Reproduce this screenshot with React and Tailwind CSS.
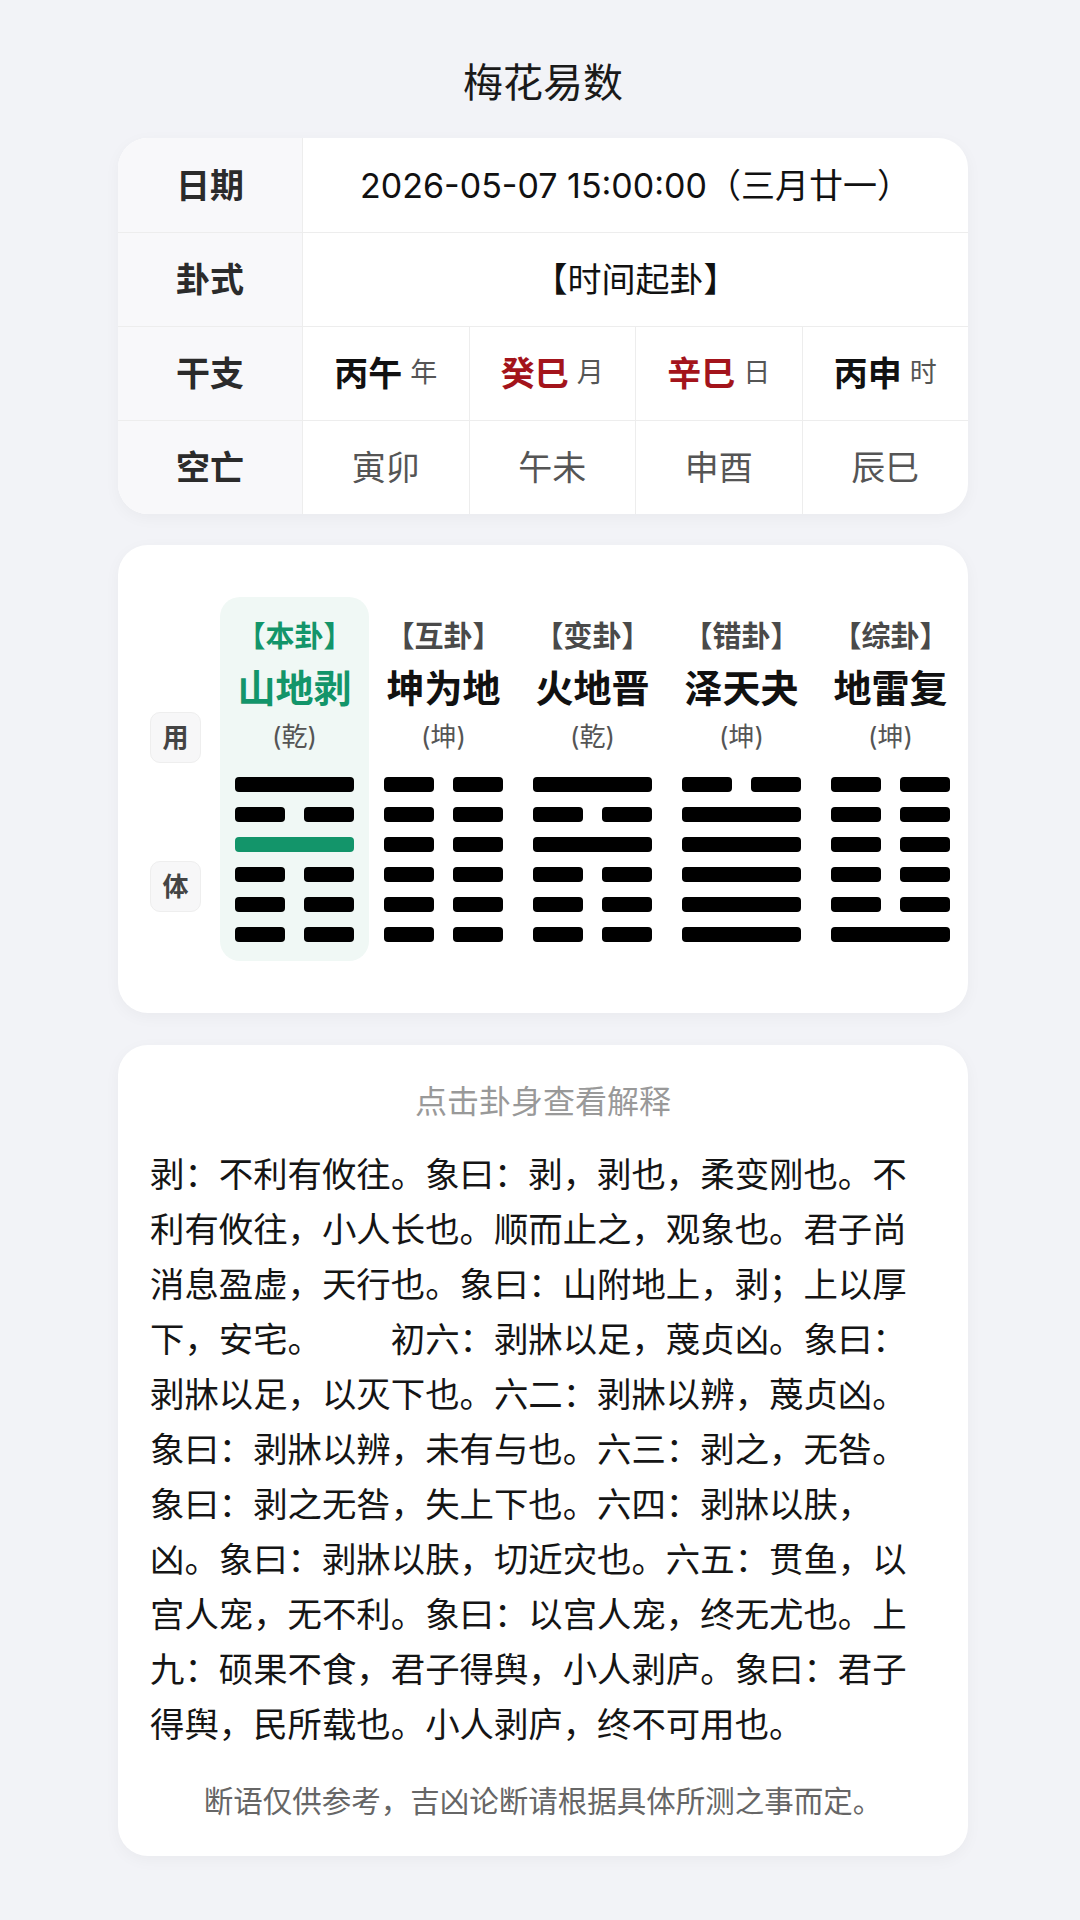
const FONT = "font-['Inter','Noto_Sans_CJK_SC',sans-serif]";

const ganzhi = [
  { gz: "丙午", tag: "年", red: false },
  { gz: "癸巳", tag: "月", red: true },
  { gz: "辛巳", tag: "日", red: true },
  { gz: "丙申", tag: "时", red: false },
];

const kongwang = ["寅卯", "午未", "申酉", "辰巳"];

// lines from top to bottom: 1 yang, 0 yin, 2 moving (green yang)
const guaList = [
  { label: "【本卦】", name: "山地剥", gong: "(乾)", lines: [1, 0, 2, 0, 0, 0], active: true },
  { label: "【互卦】", name: "坤为地", gong: "(坤)", lines: [0, 0, 0, 0, 0, 0] },
  { label: "【变卦】", name: "火地晋", gong: "(乾)", lines: [1, 0, 1, 0, 0, 0] },
  { label: "【错卦】", name: "泽天夬", gong: "(坤)", lines: [0, 1, 1, 1, 1, 1] },
  { label: "【综卦】", name: "地雷复", gong: "(坤)", lines: [0, 0, 0, 0, 0, 1] },
];

const explain =
  "剥：不利有攸往。象曰：剥，剥也，柔变刚也。不利有攸往，小人长也。顺而止之，观象也。君子尚消息盈虚，天行也。象曰：山附地上，剥；上以厚下，安宅。\u3000\u3000初六：剥牀以足，蔑贞凶。象曰：剥牀以足，以灭下也。六二：剥牀以辨，蔑贞凶。象曰：剥牀以辨，未有与也。六三：剥之，无咎。象曰：剥之无咎，失上下也。六四：剥牀以肤，凶。象曰：剥牀以肤，切近灾也。六五：贯鱼，以宫人宠，无不利。象曰：以宫人宠，终无尤也。上九：硕果不食，君子得舆，小人剥庐。象曰：君子得舆，民所载也。小人剥庐，终不可用也。";

const Label = ({ children }) => (
  <div className="w-[185px] shrink-0 flex items-center justify-center bg-[#f8f8fa] border-r border-[#ededed] text-[34px] font-bold text-[#2b2b2b]">
    {children}
  </div>
);

const Line = ({ type }) => {
  if (type === 0) {
    return (
      <div className="flex w-[119px] h-[15px] justify-between">
        <div className="w-[50px] h-full rounded-[4px] bg-black"></div>
        <div className="w-[50px] h-full rounded-[4px] bg-black"></div>
      </div>
    );
  }
  return (
    <div
      className={`w-[119px] h-[15px] rounded-[4px] ${type === 2 ? "bg-[#13956a]" : "bg-black"}`}
    ></div>
  );
};

const Gua = ({ g }) => (
  <div
    className={`w-[149px] shrink-0 flex flex-col items-center pt-[22px] pb-[19px] rounded-[20px] ${
      g.active ? "bg-[#f0f8f5]" : ""
    }`}
  >
    <div
      className={`h-[36px] leading-[36px] text-[29px] font-bold ${
        g.active ? "text-[#13956a]" : "text-[#4a4a4a]"
      }`}
    >
      {g.label}
    </div>
    <div
      className={`mt-[9px] h-[48px] leading-[48px] text-[38px] font-bold ${
        g.active ? "text-[#13956a]" : "text-[#111]"
      }`}
    >
      {g.name}
    </div>
    <div className="mt-[8px] h-[34px] leading-[34px] text-[26px] text-[#555]">{g.gong}</div>
    <div className="mt-[23px] flex flex-col gap-[15px]">
      {g.lines.map((t, i) => (
        <Line key={i} type={t} />
      ))}
    </div>
  </div>
);

const Badge = ({ children }) => (
  <div className="w-[51px] h-[51px] flex items-center justify-center rounded-[10px] bg-[#f7f7f8] border border-[#eeeeee] text-[26px] font-bold text-[#444]">
    {children}
  </div>
);

export default function App() {
  return (
    <div className={`min-h-[1920px] bg-[#f2f3f7] ${FONT} pb-[60px]`}>
      <div className="w-[850px] ml-[118px]">
        <div className="pt-[55px] h-[111px] leading-[56px] text-center text-[40px] text-[#1a1a1a]">
          梅花易数
        </div>

        <div className="mt-[27px] bg-white rounded-[30px] overflow-hidden shadow-[0_4px_16px_rgba(0,0,0,0.04)]">
          <div className="flex h-[94px]">
            <Label>日期</Label>
            <div className="flex-1 flex items-center justify-center text-[34px] text-[#111]">
              2026-05-07 15:00:00（三月廿一）
            </div>
          </div>
          <div className="flex h-[94px] border-t border-[#ededed]">
            <Label>卦式</Label>
            <div className="flex-1 flex items-center justify-center text-[34px] text-[#111]">
              【时间起卦】
            </div>
          </div>
          <div className="flex h-[94px] border-t border-[#ededed]">
            <Label>干支</Label>
            {ganzhi.map((c, i) => (
              <div
                key={c.tag}
                className={`flex-1 flex items-center justify-center gap-[8px] ${
                  i > 0 ? "border-l border-[#ededed]" : ""
                }`}
              >
                <span className={`text-[34px] font-bold ${c.red ? "text-[#a3141b]" : "text-[#111]"}`}>
                  {c.gz}
                </span>
                <span className="text-[27px] text-[#555]">{c.tag}</span>
              </div>
            ))}
          </div>
          <div className="flex h-[94px] border-t border-[#ededed]">
            <Label>空亡</Label>
            {kongwang.map((k, i) => (
              <div
                key={k}
                className={`flex-1 flex items-center justify-center text-[34px] text-[#555] ${
                  i > 0 ? "border-l border-[#ededed]" : ""
                }`}
              >
                {k}
              </div>
            ))}
          </div>
        </div>

        <div className="mt-[31px] bg-white rounded-[30px] shadow-[0_4px_16px_rgba(0,0,0,0.04)] flex pl-[32px] pr-[3px] py-[52px]">
          <div className="w-[51px] shrink-0 mr-[19px] flex flex-col pt-[115px] gap-[98px]">
            <Badge>用</Badge>
            <Badge>体</Badge>
          </div>
          {guaList.map((g) => (
            <Gua key={g.name} g={g} />
          ))}
        </div>

        <div className="mt-[32px] bg-white rounded-[30px] shadow-[0_4px_16px_rgba(0,0,0,0.04)] px-[32px] pt-[37px] pb-[36px]">
          <div className="text-center text-[32px] leading-[40px] text-[#999]">点击卦身查看解释</div>
          <p className="mt-[23px] font-['Noto_Sans_CJK_SC',sans-serif] [text-spacing-trim:space-all] text-[34.4px] leading-[55px] text-[#151515]">
            {explain}
          </p>
          <div className="mt-[32px] text-center text-[29.5px] leading-[38px] text-[#666]">
            断语仅供参考，吉凶论断请根据具体所测之事而定。
          </div>
        </div>
      </div>
    </div>
  );
}
